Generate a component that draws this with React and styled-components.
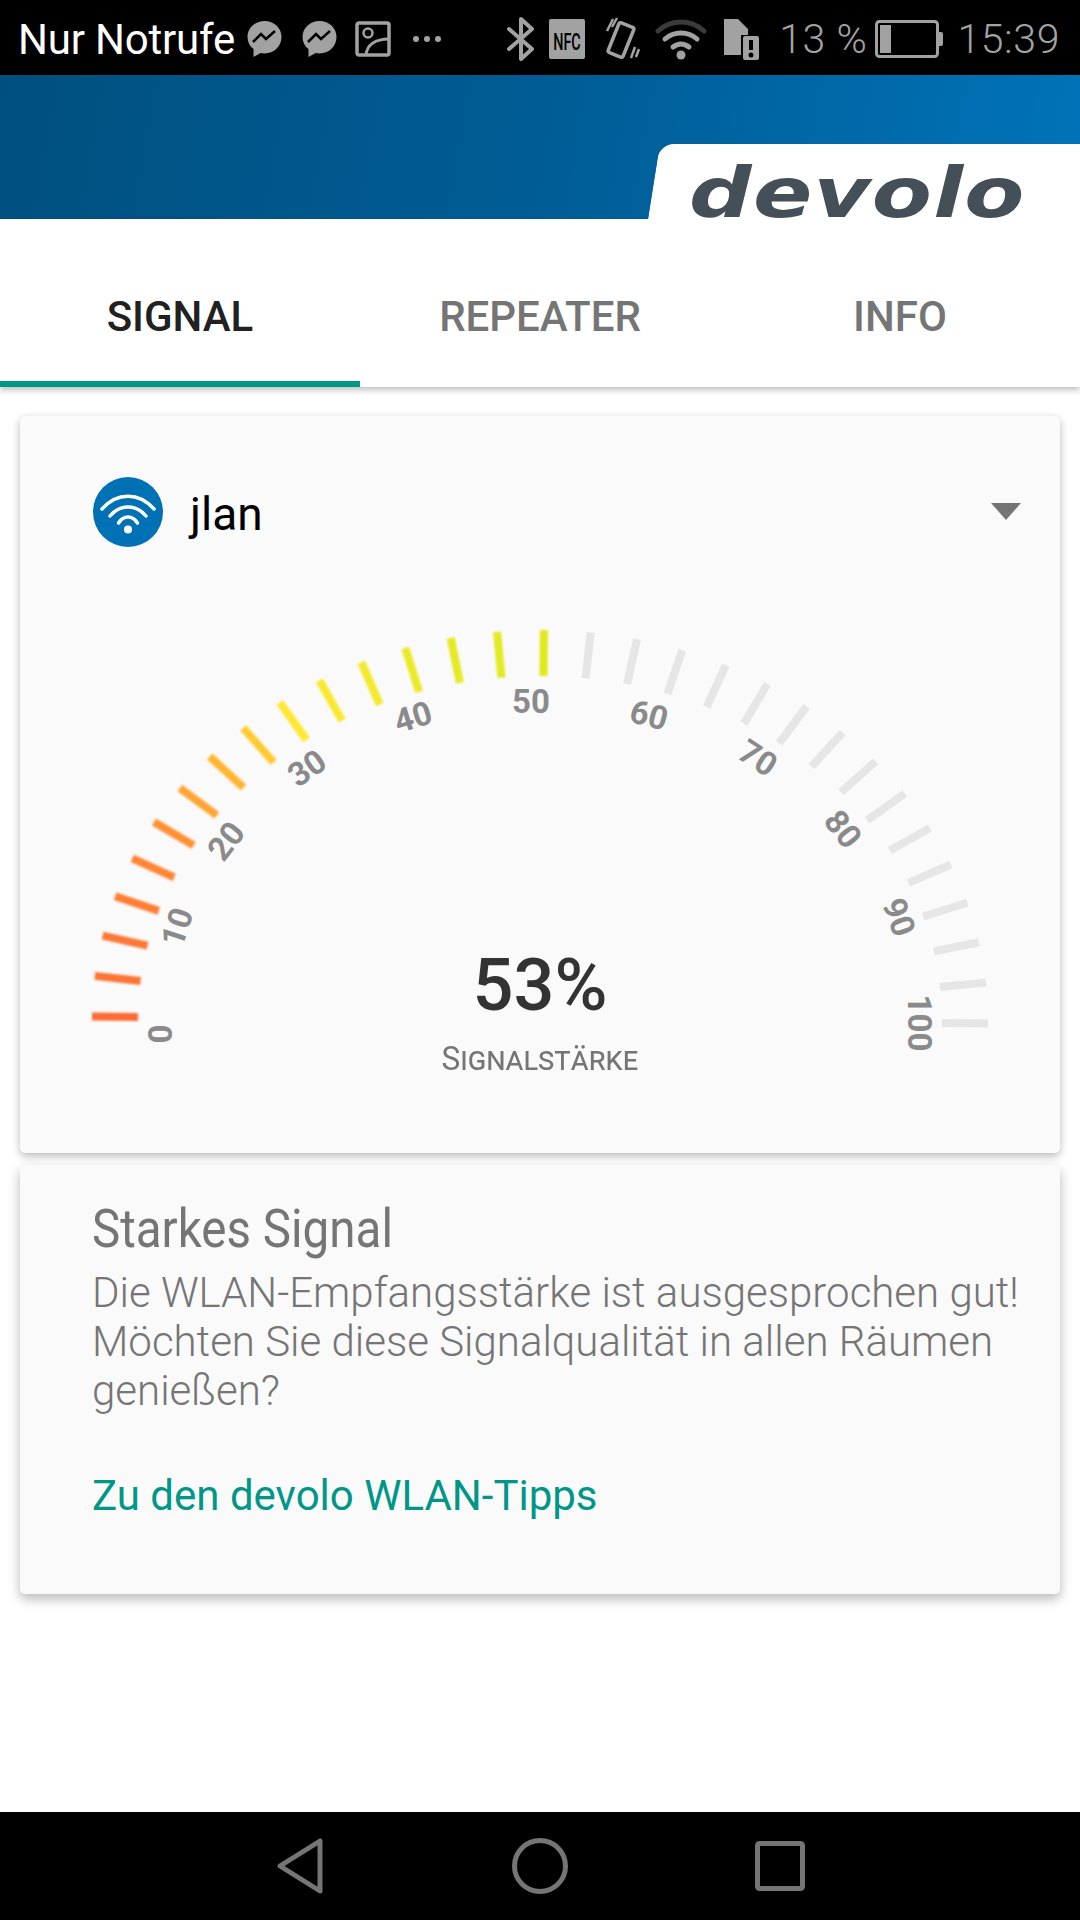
import React from 'react'
import styled, { createGlobalStyle } from 'styled-components'

const Global = createGlobalStyle`
  html, body { margin: 0; padding: 0; background: #fff; }
  body { font-family: Roboto, "Liberation Sans", sans-serif; }
  * { box-sizing: border-box; }
`

const Page = styled.div`
  width: 1080px;
  height: 1920px;
  display: flex;
  flex-direction: column;
  overflow: hidden;
  background: #fff;
`

const StatusBar = styled.div`
  height: 75px;
  flex: none;
  background: #000;
  display: flex;
  align-items: center;
  justify-content: space-between;
  padding: 3px 20px 0 18px;
`

const StatusGroup = styled.div`
  display: flex;
  align-items: center;
`

const Carrier = styled.span`
  color: #fff;
  font-size: 42px;
  letter-spacing: -0.2px;
  margin-right: 11px;
`

const StatusText = styled.span`
  color: #a3a3a3;
  font-size: 41px;
  font-weight: 300;
  letter-spacing: 0.6px;
  margin: ${p => p.$margin || 0};
`

const StatusIcon = styled.svg`
  display: block;
  flex: none;
  margin-right: ${p => p.$gap || 0}px;
`

const Header = styled.div`
  height: 144px;
  flex: none;
  background: linear-gradient(100deg, #00507f 0%, #005c95 50%, #0073b8 100%);
  display: flex;
  justify-content: flex-end;
  align-items: flex-end;
`

const LogoTab = styled.div`
  position: relative;
  z-index: 1;
  width: 432px;
  height: 75px;
  display: flex;
  align-items: flex-end;
  &::before {
    content: '';
    position: absolute;
    left: 0;
    top: 0;
    bottom: 0;
    right: 0;
    background: #fff;
    border-top-left-radius: 14px;
    transform: skewX(-9deg);
    transform-origin: bottom left;
    clip-path: inset(0 -12px 0 0);
  }
  &::after {
    content: '';
    position: absolute;
    top: 0;
    bottom: 0;
    right: 0;
    width: 40px;
    background: #fff;
  }
`

const LogoText = styled.span`
  position: relative;
  z-index: 1;
  display: block;
  margin: 0 0 -9px 41px;
  font-family: "DejaVu Sans", sans-serif;
  font-size: 70px;
  line-height: 70px;
  font-weight: 700;
  font-style: italic;
  color: #444f57;
  transform: scaleX(1.25);
  transform-origin: left bottom;
  letter-spacing: 1px;
`

const Tabs = styled.div`
  height: 168px;
  flex: none;
  display: grid;
  grid-template-columns: repeat(3, 1fr);
  background: #fff;
  box-shadow: 0 3px 6px rgba(0, 0, 0, 0.25);
`

const Tab = styled.div`
  display: flex;
  align-items: center;
  justify-content: center;
  padding-top: 32px;
  font-size: 42px;
  font-weight: 500;
  color: ${p => (p.$active ? '#212121' : '#757575')};
  border-bottom: 6px solid ${p => (p.$active ? '#009688' : 'transparent')};
`

const Content = styled.div`
  flex: 1;
  display: flex;
  flex-direction: column;
  gap: 12px;
  padding: 29px 20px 0;
`

const Card = styled.div`
  background: #fafafa;
  border-radius: 5px;
  box-shadow: 0 3px 8px rgba(0, 0, 0, 0.28);
`

const GaugeCard = styled(Card)`
  height: 737px;
  padding-top: 61px;
`

const NetworkRow = styled.div`
  display: flex;
  align-items: center;
  padding: 0 39px 0 73px;
`

const NetworkName = styled.span`
  flex: 1;
  margin-left: 27px;
  padding-top: 3px;
  font-size: 46px;
  color: #000;
`

const Caret = styled.div`
  width: 0;
  height: 0;
  margin-top: -2px;
  border-left: 15px solid transparent;
  border-right: 15px solid transparent;
  border-top: 17px solid #757575;
`

const GaugeWrap = styled.div`
  position: relative;
  margin-top: 53px;
  width: 1040px;
  height: 500px;
`

const GaugeSvg = styled.svg`
  display: block;
`

const Readout = styled.div`
  position: absolute;
  left: 0;
  right: 0;
  top: 344px;
  display: flex;
  flex-direction: column;
  align-items: center;
`

const Percent = styled.div`
  font-size: 72px;
  line-height: 84px;
  font-weight: 500;
  color: #333;
`

const ReadoutLabel = styled.div`
  margin-top: 10px;
  font-size: 34px;
  line-height: 40px;
  color: #757575;
  font-variant: small-caps;
  transform: scaleX(0.93);
`

const TipCard = styled(Card)`
  height: 429px;
  padding: 34px 0 0 72px;
  box-shadow: 0 5px 12px rgba(0, 0, 0, 0.28);
`

const TipTitle = styled.div`
  font-size: 54px;
  line-height: 60px;
  color: #757575;
  transform: scaleX(0.88);
  transform-origin: left center;
`

const TipBody = styled.div`
  margin-top: 9px;
  font-size: 42px;
  line-height: 49px;
  font-weight: 300;
  color: #757575;
  white-space: nowrap;
`

const TipLink = styled.div`
  margin-top: 56px;
  font-size: 42px;
  line-height: 50px;
  color: #009688;
`

const NavBar = styled.div`
  height: 108px;
  flex: none;
  background: #000;
  display: grid;
  grid-template-columns: 276px 48px 188px 56px 187px 50px;
  align-items: center;
`

const NavIcon = styled.svg`
  display: block;
  grid-column: ${p => p.$col};
`

const ticks = Array.from({ length: 31 }, (_, i) => i)
const tickColors = [
  '#fb6d36', '#fc7436', '#fc7837', '#fd7f36', '#fe8636', '#ff9136', '#ffa534', '#ffb533',
  '#ffcb33', '#ffe733', '#f9e92f', '#f2ea2b', '#ecea27', '#e6ea24', '#e1ea20', '#dfea1d',
]

const labels = [
  ['0', 140, 434, -90],
  ['10', 157, 327, -72],
  ['20', 206, 241, -52],
  ['30', 287, 168, -35],
  ['40', 393, 117, -17],
  ['50', 511, 101, 0],
  ['60', 629, 115, 15],
  ['70', 738, 158, 33],
  ['80', 823, 229, 52],
  ['90', 879, 317, 70],
  ['100', 899, 423, 90],
]

function tickLine(i, stroke) {
  const a = ((6 * i + 0.5) * Math.PI) / 180
  const c = Math.cos(a)
  const s = Math.sin(a)
  const x1 = 520 - 448 * c
  const y1 = 420 - 390 * s
  return <line key={i} x1={x1} y1={y1} x2={x1 + 46 * c} y2={y1 + 46 * s} stroke={stroke} strokeWidth="8" />
}

function Gauge({ value }) {
  const active = Math.floor(value / (100 / 30))
  return (
    <GaugeSvg width="1040" height="500" viewBox="0 0 1040 500">
      <defs>
        <filter id="soft" filterUnits="userSpaceOnUse" x="0" y="0" width="1040" height="500">
          <feGaussianBlur stdDeviation="0.9" />
        </filter>
      </defs>
      <g filter="url(#soft)">
        {ticks.filter(i => i <= active).map(i => tickLine(i, tickColors[i]))}
      </g>
      {ticks.filter(i => i > active).map(i => tickLine(i, '#e6e6e6'))}
      {labels.map(([t, x, y, r]) => (
        <text
          key={t}
          x={x}
          y={y}
          transform={`rotate(${r} ${x} ${y})`}
          textAnchor="middle"
          dominantBaseline="central"
          fontFamily="Roboto, sans-serif"
          fontWeight="700"
          fontSize="33"
          fill="#8a8a8a"
        >
          {t}
        </text>
      ))}
    </GaugeSvg>
  )
}

const Messenger = ({ gap }) => (
  <StatusIcon $gap={gap} width="37" height="38" viewBox="0 0 37 38">
    <path d="M18.5 1C9 1 1.5 8 1.5 17c0 5 2.2 9.200 6 12v8l7.200-4c1.200.3 2.500.4 3.800.4 9.500 0 17-7.200 17-16.400S28 1 18.500 1z" fill="#a2a2a2" />
    <path d="M7 22l8-8 5 5 9-8" fill="none" stroke="#000" strokeWidth="2.500" />
  </StatusIcon>
)

function App() {
  return (
    <Page>
      <Global />
      <StatusBar>
        <StatusGroup>
          <Carrier>Nur Notrufe</Carrier>
          <Messenger gap={18} />
          <Messenger gap={17} />
          <StatusIcon $gap={21} width="36" height="36" viewBox="0 0 36 36">
            <rect x="2" y="2" width="32" height="32" rx="2" fill="none" stroke="#a2a2a2" strokeWidth="3.500" />
            <circle cx="13" cy="12" r="4.500" fill="none" stroke="#a2a2a2" strokeWidth="2.500" />
            <path d="M11 34c1-10 9-16 23-16" fill="none" stroke="#a2a2a2" strokeWidth="3" />
          </StatusIcon>
          <StatusIcon width="30" height="8" viewBox="0 0 30 8">
            <circle cx="4" cy="4" r="3" fill="#a2a2a2" />
            <circle cx="15" cy="4" r="3" fill="#a2a2a2" />
            <circle cx="26" cy="4" r="3" fill="#a2a2a2" />
          </StatusIcon>
        </StatusGroup>
        <StatusGroup>
          <StatusIcon $gap={14} width="29" height="44" viewBox="0 0 29 44">
            <path d="M3 12l23 20-11 10V2l11 10L3 32" fill="none" stroke="#a2a2a2" strokeWidth="4" strokeLinejoin="round" strokeLinecap="round" />
          </StatusIcon>
          <StatusIcon $gap={20} width="36" height="40" viewBox="0 0 36 40">
            <rect width="36" height="40" rx="2" fill="#a2a2a2" />
            <text transform="translate(18 31) scale(0.9 1.5)" textAnchor="middle" fontFamily="Roboto, sans-serif" fontSize="16" fontWeight="500" fill="#000">NFC</text>
          </StatusIcon>
          <StatusIcon $gap={15} width="35" height="44" viewBox="0 0 35 44">
            <rect x="8" y="7" width="16" height="32" rx="2" transform="rotate(22 16 23)" fill="none" stroke="#a2a2a2" strokeWidth="3.500" />
            <path d="M8 2L2 14M12 1L7 10M30 30l-4 11M34 32l-3 8" fill="none" stroke="#a2a2a2" strokeWidth="2.500" />
          </StatusIcon>
          <StatusIcon $gap={15} width="52" height="42" viewBox="0 0 52 42">
            <path d="M3 13C16 1 36 1 49 13" fill="none" stroke="#3a3a3a" strokeWidth="5" strokeLinecap="round" />
            <path d="M10 21c9-8 23-8 32 0M18 29c5-4 11-4 16 0" fill="none" stroke="#a2a2a2" strokeWidth="5" strokeLinecap="round" />
            <circle cx="26" cy="37" r="4.500" fill="#a2a2a2" />
          </StatusIcon>
          <StatusIcon width="38" height="44" viewBox="0 0 38 44">
            <path d="M2 2h14l10 10v6h-7v20H2z" fill="#a2a2a2" />
            <rect x="21" y="19" width="16" height="24" rx="2" fill="#a2a2a2" />
            <rect x="27" y="23" width="4" height="10" fill="#000" />
            <circle cx="29" cy="38" r="2.500" fill="#000" />
          </StatusIcon>
          <StatusText $margin="0 8px 0 19px">13 %</StatusText>
          <StatusIcon $gap={14} width="68" height="38" viewBox="0 0 68 38">
            <rect x="1.500" y="1.500" width="61" height="35" rx="3" fill="none" stroke="#a2a2a2" strokeWidth="3" />
            <rect x="5" y="5" width="11" height="28" fill="#a2a2a2" />
            <path d="M64 12h2a2 2 0 0 1 2 2v10a2 2 0 0 1-2 2h-2z" fill="#a2a2a2" />
          </StatusIcon>
          <StatusText>15:39</StatusText>
        </StatusGroup>
      </StatusBar>

      <Header>
        <LogoTab>
          <LogoText>devolo</LogoText>
        </LogoTab>
      </Header>

      <Tabs>
        <Tab $active>SIGNAL</Tab>
        <Tab>REPEATER</Tab>
        <Tab>INFO</Tab>
      </Tabs>

      <Content>
        <GaugeCard>
          <NetworkRow>
            <svg width="70" height="70" viewBox="0 0 70 70">
              <circle cx="35" cy="35" r="35" fill="#0071b5" />
              <g fill="none" stroke="#fff" strokeWidth="3.500" strokeLinecap="round">
                <path d="M9 32c15-17 37-17 52 0" />
                <path d="M17 39c10-12 26-12 36 0" />
                <path d="M25.500 46c5-8 14-8 19 0" />
              </g>
              <circle cx="35" cy="52.500" r="4" fill="#fff" />
            </svg>
            <NetworkName>jlan</NetworkName>
            <Caret />
          </NetworkRow>
          <GaugeWrap>
            <Gauge value={53} />
            <Readout>
              <Percent>53%</Percent>
              <ReadoutLabel>Signalstärke</ReadoutLabel>
            </Readout>
          </GaugeWrap>
        </GaugeCard>

        <TipCard>
          <TipTitle>Starkes Signal</TipTitle>
          <TipBody>
            Die WLAN-Empfangsstärke ist ausgesprochen gut!
            <br />
            Möchten Sie diese Signalqualität in allen Räumen
            <br />
            genießen?
          </TipBody>
          <TipLink>Zu den devolo WLAN-Tipps</TipLink>
        </TipCard>
      </Content>

      <NavBar>
        <NavIcon $col={2} width="48" height="56" viewBox="0 0 48 56">
          <path d="M4 28L44 3v50z" fill="none" stroke="#757575" strokeWidth="5" strokeLinejoin="round" />
        </NavIcon>
        <NavIcon $col={4} width="56" height="56" viewBox="0 0 56 56">
          <circle cx="28" cy="28" r="25.500" fill="none" stroke="#757575" strokeWidth="5" />
        </NavIcon>
        <NavIcon $col={6} width="50" height="50" viewBox="0 0 50 50">
          <rect x="2.500" y="2.500" width="45" height="45" rx="2" fill="none" stroke="#757575" strokeWidth="5" />
        </NavIcon>
      </NavBar>
    </Page>
  )
}

export default App
